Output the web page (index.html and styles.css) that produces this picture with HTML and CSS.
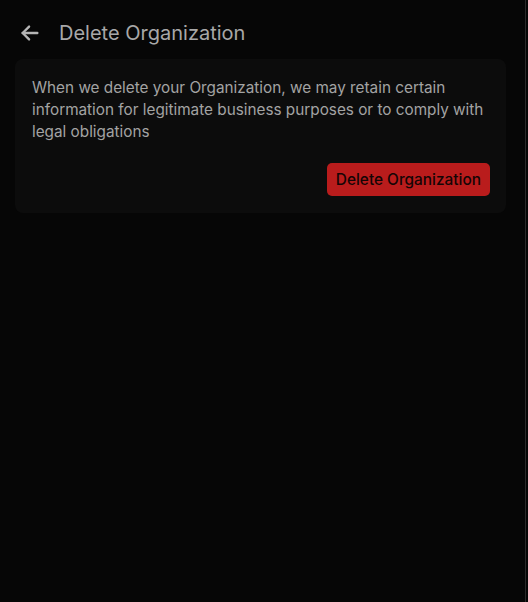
FILE: index.html
```html
<!DOCTYPE html>
<html lang="en">
  <head>
    <meta charset="UTF-8" />
    <meta name="viewport" content="width=device-width, initial-scale=1.0" />
    <title>Delete Organization</title>
    <link rel="stylesheet" href="styles.css">
  </head>
  <body>
    <div class="panel">
      <div class="header">
        <button class="back-btn" aria-label="Back">
          <svg width="22" height="22" viewBox="0 0 24 24" fill="none" stroke="currentColor" stroke-width="2.6" stroke-linecap="round" stroke-linejoin="round">
            <path d="M20 12H4" />
            <path d="M11 5l-7 7 7 7" />
          </svg>
        </button>
        <h1 class="title">Delete Organization</h1>
      </div>
      <div class="card">
        <p class="card-text">When we delete your Organization, we may retain certain information for legitimate business purposes or to comply with legal obligations</p>
        <div class="card-actions">
          <button class="danger-btn">Delete Organization</button>
        </div>
      </div>
    </div>
  </body>
</html>
```

FILE: styles.css
```css
html,
body {
  height: 100%;
}
body {
  margin: 0;
  background-color: #060606;
  font-family: Inter, "Noto Sans", sans-serif;
  color: #a3a3a3;
}
/* Left panel with a thin border on the right */
.panel {
  box-sizing: border-box;
  width: 526px;
  height: 100%;
  padding: 0 19px 0 15px;
  border-right: 1px solid #2a2a2a;
}
/* Header */
.header {
  box-sizing: border-box;
  display: flex;
  align-items: center;
  height: 59px;
  padding-top: 7px;
  gap: 18px;
}
.back-btn {
  display: flex;
  align-items: center;
  padding: 0;
  margin-left: 4px;
  background: none;
  border: none;
  color: #b5b5b5;
  cursor: pointer;
}
.title {
  margin: 0;
  font-size: 20px;
  font-weight: 400;
  color: #a8a8a8;
}
/* Card */
.card {
  background-color: #0c0c0c;
  border-radius: 8px;
  padding: 18px 16px 17px 17px;
}
.card-text {
  margin: 0;
  font-size: 15.3px;
  line-height: 22px;
  color: #a3a3a3;
}
.card-actions {
  display: flex;
  justify-content: flex-end;
  margin-top: 20px;
}
.danger-btn {
  height: 33px;
  padding: 0 9px;
  background-color: #b91c1c;
  border: none;
  border-radius: 5px;
  font-family: Inter, "Noto Sans", sans-serif;
  font-size: 15.4px;
  font-weight: 500;
  color: #140505;
  cursor: pointer;
}
```
